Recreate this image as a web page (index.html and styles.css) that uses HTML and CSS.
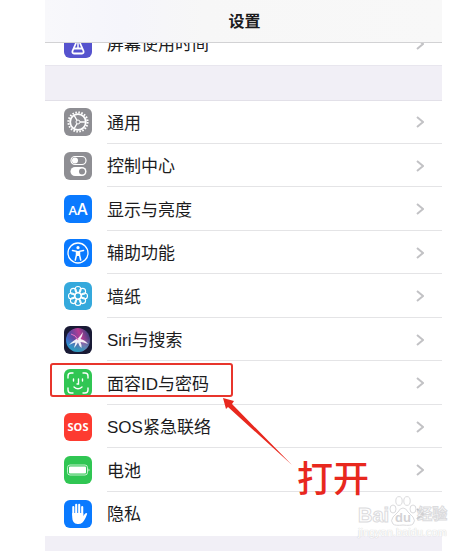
FILE: index.html
```html
<!DOCTYPE html>
<html lang="zh-CN">
<head>
<meta charset="utf-8">
<title>设置</title>
<link rel="stylesheet" href="styles.css">
</head>
<body>

<div class="phone">

<header class="navbar"><h1>设置</h1></header>

<ul class="group scrolled">
<li><a class="row" href="#screentime">
	<svg class="icon indigo" viewBox="0 0 28 28"><path d="M10 5h8M12 5v8L8.500 21q-.5 2.500 1.500 2.500h8q2 0 1.500-2.500l-3.500-8V5" fill="none" stroke="#fff" stroke-width="1.800" stroke-linejoin="round"/><path d="M14 12v6" stroke="#fff" stroke-width="1.500"/><path d="M10.500 17.500h7l1 2h-9z" fill="#fff"/></svg>
	<span class="label">屏幕使用时间</span>
	<svg class="chevron" viewBox="0 0 8 12"><path d="M1 1l6 5-6 5"/></svg>
</a></li>
</ul>

<ul class="group main">
<li><a class="row" href="#general">
	<svg class="icon gray" viewBox="0 0 28 28"><g fill="none" stroke="#fff"><circle cx="14" cy="14" r="9.6" stroke-width="2" stroke-dasharray="1.6 1.416"/><circle cx="14" cy="14" r="7.8" stroke-width="1.8"/><circle cx="14" cy="14" r="2" stroke-width="1"/><path d="M16 14h5M13 12.3l-2.7-4.6M13 15.7l-2.7 4.6" stroke-width="1.3"/></g></svg>
	<span class="label">通用</span>
	<svg class="chevron" viewBox="0 0 8 12"><path d="M1 1l6 5-6 5"/></svg>
</a></li>
<li><a class="row" href="#control">
	<svg class="icon gray" viewBox="0 0 28 28"><rect x="7" y="4.5" width="15" height="8" rx="4" fill="none" stroke="#fff" stroke-width="1.2"/><circle cx="11" cy="8.500" r="3" fill="#fff"/><rect x="6.500" y="15" width="16" height="9" rx="4.500" fill="#fff"/><circle cx="18" cy="19.500" r="3" fill="#8e8e93"/></svg>
	<span class="label">控制中心</span>
	<svg class="chevron" viewBox="0 0 8 12"><path d="M1 1l6 5-6 5"/></svg>
</a></li>
<li><a class="row" href="#display">
	<span class="icon blue aa"><small>A</small>A</span>
	<span class="label">显示与亮度</span>
	<svg class="chevron" viewBox="0 0 8 12"><path d="M1 1l6 5-6 5"/></svg>
</a></li>
<li><a class="row" href="#accessibility">
	<svg class="icon blue" viewBox="0 0 28 28"><circle cx="14" cy="14" r="10" fill="none" stroke="#fff" stroke-width="1.3"/><circle cx="14" cy="8.700" r="1.600" fill="#fff"/><path d="M8.500 11.500l4 .8v3.500L11.300 21M19.500 11.500l-4 .8v3.500l1.200 5.200" fill="none" stroke="#fff" stroke-width="1.500" stroke-linecap="round"/><path d="M12 12h4v5h-4z" fill="#fff"/></svg>
	<span class="label">辅助功能</span>
	<svg class="chevron" viewBox="0 0 8 12"><path d="M1 1l6 5-6 5"/></svg>
</a></li>
<li><a class="row" href="#wallpaper">
	<svg class="icon cyan" viewBox="0 0 28 28"><g fill="none" stroke="#fff" stroke-width="1.1"><circle cx="14" cy="14" r="3"/><circle cx="14" cy="7.500" r="3"/><circle cx="18.600" cy="9.400" r="3"/><circle cx="20.500" cy="14" r="3"/><circle cx="18.600" cy="18.600" r="3"/><circle cx="14" cy="20.500" r="3"/><circle cx="9.400" cy="18.600" r="3"/><circle cx="7.500" cy="14" r="3"/><circle cx="9.400" cy="9.400" r="3"/></g></svg>
	<span class="label">墙纸</span>
	<svg class="chevron" viewBox="0 0 8 12"><path d="M1 1l6 5-6 5"/></svg>
</a></li>
<li><a class="row" href="#siri">
	<svg class="icon siri" viewBox="0 0 28 28">
		<defs>
		<linearGradient id="orb" x1="0" y1="0.7" x2="1" y2="0.3"><stop offset="0" stop-color="#2b79d8"/><stop offset=".35" stop-color="#6147a0"/><stop offset=".65" stop-color="#b83b94"/><stop offset="1" stop-color="#35417e"/></linearGradient>
		<linearGradient id="glow" x1="0" y1="0" x2="0" y2="1"><stop offset=".45" stop-color="#2fd3dc" stop-opacity="0"/><stop offset="1" stop-color="#25a5bd" stop-opacity=".9"/></linearGradient>
		</defs>
		<circle cx="14" cy="14" r="12" fill="url(#orb)"/><circle cx="14" cy="14" r="12" fill="url(#glow)"/>
		<path d="M5 19Q10 13.500 14 12.500Q17 9 19 6Q18.500 10 16.500 13Q21 14 24 18Q19 16 16.500 16Q18 19 17.500 22Q15 20 14 16.500Q12 20 10 22Q11 18 11.500 16.500Q8 17 5 19z" fill="#fff" fill-opacity=".9"/>
		<path d="M7 8Q12 9 14 14" fill="none" stroke="#ef73c3" stroke-width="1"/>
	</svg>
	<span class="label">Siri与搜索</span>
	<svg class="chevron" viewBox="0 0 8 12"><path d="M1 1l6 5-6 5"/></svg>
</a></li>
<li class="marked"><a class="row" href="#faceid">
	<svg class="icon green" viewBox="0 0 28 28"><g fill="none" stroke="#fff" stroke-width="1.4" stroke-linecap="round"><path d="M4 9V7q0-3 3-3h2M19 4h2q3 0 3 3v2M24 19v2q0 3-3 3h-2M9 24H7q-3 0-3-3v-2M9.500 10v2M18.500 10v2M14.500 10v5h-1.500M10 18q4 3.500 8 0"/></g></svg>
	<span class="label">面容ID与密码</span>
	<svg class="chevron" viewBox="0 0 8 12"><path d="M1 1l6 5-6 5"/></svg>
</a></li>
<li><a class="row" href="#sos">
	<span class="icon red sos">SOS</span>
	<span class="label">SOS紧急联络</span>
	<svg class="chevron" viewBox="0 0 8 12"><path d="M1 1l6 5-6 5"/></svg>
</a></li>
<li><a class="row" href="#battery">
	<svg class="icon green" viewBox="0 0 28 28"><rect x="3.500" y="9" width="20" height="10" rx="2.500" fill="none" stroke="#fff" stroke-opacity=".7"/><rect x="5" y="10.500" width="17" height="7" rx="1" fill="#fff"/><path d="M24.500 12.500q2 1.500 0 3z" fill="#fff" fill-opacity=".8"/></svg>
	<span class="label">电池</span>
	<svg class="chevron" viewBox="0 0 8 12"><path d="M1 1l6 5-6 5"/></svg>
</a></li>
<li><a class="row" href="#privacy">
	<svg class="icon blue" viewBox="0 0 28 28"><path d="M9.300 15V7M12.200 14V4.800M15.200 14V4.800M18.200 15V7" stroke="#fff" stroke-width="2.100" stroke-linecap="round"/><path d="M8.200 13h11v3l2-2.500q1.500-1 2 .2Q21 20 18.500 22.500Q16.500 24.300 13.500 24Q8.200 23.500 8.200 17z" fill="#fff"/></svg>
	<span class="label">隐私</span>
	<svg class="chevron" viewBox="0 0 8 12"><path d="M1 1l6 5-6 5"/></svg>
</a></li>
</ul>

<!-- callout -->
<svg class="arrow" viewBox="0 0 70 68"><path d="M0 0L11 3L9 6L69 67L5 9L3 11z" fill="#e8281e"/></svg>
<strong class="callout">打开</strong>

<div class="watermark">
	<div class="brand">
		<span>Bai</span>
		<svg class="paw" viewBox="0 0 28 30"><g fill="#fff" stroke="#d3d3d6"><ellipse cx="4" cy="13" rx="3" ry="4"/><ellipse cx="10" cy="5" rx="3.200" ry="4.400"/><ellipse cx="18" cy="5" rx="3.200" ry="4.400"/><ellipse cx="24" cy="13" rx="3" ry="4"/><path d="M14 12q3 0 5 4l5 5q3 4 0 7q-2 2-10 1q-8 1-10-1q-3-3 0-7l5-5q2-4 5-4z"/></g><text class="du" x="14" y="26" text-anchor="middle">du</text></svg>
		<span class="exp">经验</span>
	</div>
	<div class="site">jingyan.baidu.com</div>
</div>

</div>

</body>
</html>
```
FILE: styles.css
```css
body { margin: 0;
	   background: #fff;
	   font-family: "Liberation Sans", "Noto Sans CJK SC", sans-serif; }

.phone { position: relative;
		 min-height: 100vh;
		 margin: 0 33px 0 45px;
		 background: #f1eff6; }

.navbar { position: relative;
		  z-index: 1;
		  height: 42px;
		  display: flex;
		  align-items: center;
		  justify-content: center;
		  background: linear-gradient(90deg, #f8f8fb, #f5f5fb 20%, #f7f7f7 40%, #f8f8f8);
		  border-bottom: 1px solid #d2d2d4; }
.navbar h1 { margin: 0;
			 padding: 2px 0 0 2px;
			 font-size: 16px;
			 line-height: 24px;
			 color: #1c1c1e; }

.group { display: grid;
		 margin: 0;
		 padding: 0;
		 list-style: none;
		 background: #fff; }
.group li { position: relative;
			display: grid; }
.scrolled { height: 43px;
			margin-top: -21px;
			border-bottom: 1px solid #e8e6ee; }
.main { grid-template-rows: repeat(10, 1fr);
		height: 435px;
		margin-top: 34px;
		border-top: 1px solid #e2e0e8; }

/* separator starts under the label */
.main li + li::before { content: "";
						position: absolute;
						top: -2px;
						left: 62px;
						right: 0;
						height: 1px;
						background: #e4e4e6; }

.row { display: flex;
	   align-items: center;
	   padding: 0 18px 0 19px;
	   color: #1c1c1e;
	   text-decoration: none; }
.main .row { padding-bottom: 1px; }
.label { flex: 1;
		 margin-left: 15px;
		 padding-top: 3px;
		 font-size: 17px;
		 line-height: 24px; }
.chevron { width: 8px;
		   height: 12px;
		   fill: none;
		   stroke: #c2c2c5;
		   stroke-width: 2; }

.icon { width: 28px;
		height: 28px;
		border-radius: 6px;
		color: #fff; }
.indigo { background: #5653ce; }
.gray { background: #8e8e93; }
.blue { background: #0a7aff; }
.cyan { background: #35a9dc; }
.siri { background: #191a35; }
.green { background: #30c653; }
.red { background: #fd3b30; }

.aa, .sos { display: flex;
			justify-content: center;
			font-family: "Open Sans", sans-serif; }
.aa { align-items: baseline;
	  font-size: 16px;
	  font-weight: 600;
	  line-height: 28px; }
.aa small { font-size: 13px; }
.sos { align-items: center;
	   font-size: 11px;
	   font-weight: bold; }

.marked::after { content: "";
				 position: absolute;
				 z-index: 1;
				 top: 1px;
				 left: 5px;
				 width: 179px;
				 height: 30px;
				 border: 2px solid #e8352c;
				 border-radius: 3px; }

.arrow { position: absolute;
		 top: 398px;
		 left: 178px;
		 width: 70px;
		 height: 68px; }
.callout { position: absolute;
		   top: 456px;
		   left: 252px;
		   font-size: 36px;
		   line-height: 48px;
		   font-weight: 500;
		   color: #e8281e; }

.watermark { position: absolute;
			 top: 496px;
			 left: 313px;
			 color: #fff;
			 white-space: nowrap;
			 opacity: .8; }
.brand { display: flex;
		 align-items: flex-end;
		 height: 30px;
		 font-size: 20px;
		 line-height: 22px;
		 font-weight: bold;
		 -webkit-text-stroke: 1px #d3d3d6; }
.paw { width: 28px;
	   height: 30px; }
.du { font-size: 13px;
	  fill: #c9c9cc;
	  -webkit-text-stroke: 0; }
.exp { font-size: 15px;
	   line-height: 24px; }
.site { font-size: 11px;
		line-height: 12px;
		text-shadow: 0 0 1px #ccc, 0 0 1px #ccc; }
```
